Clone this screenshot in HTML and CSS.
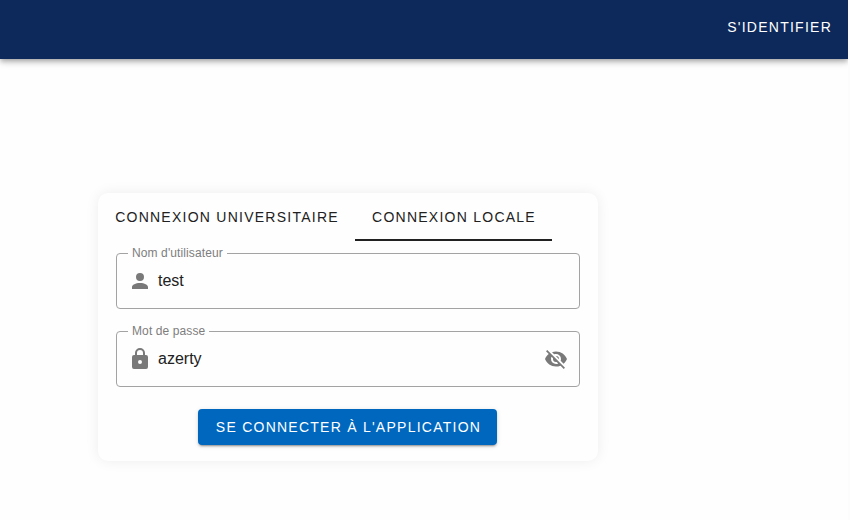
FILE: index.html
```html
<!DOCTYPE html>
<html lang="fr">
<head>
<meta charset="utf-8">
<title>Connexion</title>
<link rel="stylesheet" href="styles.css">
</head>
<body>
<div class="page">
<header class="bar"><a class="bar-link">S'IDENTIFIER</a></header>
<main class="card">
  <nav class="tabs">
    <button class="tab">CONNEXION UNIVERSITAIRE</button>
    <button class="tab tab-active">CONNEXION LOCALE</button>
  </nav>
  <form class="form">
    <fieldset class="field">
      <legend class="label">Nom d'utilisateur</legend>
      <div class="row">
        <svg class="icon" viewBox="0 0 24 24"><path d="M12 4a4 4 0 0 1 4 4 4 4 0 0 1-4 4 4 4 0 0 1-4-4 4 4 0 0 1 4-4m0 10c4.42 0 8 1.79 8 4v2H4v-2c0-2.21 3.58-4 8-4"/></svg>
        <span class="value">test</span>
      </div>
    </fieldset>
    <fieldset class="field">
      <legend class="label">Mot de passe</legend>
      <div class="row">
        <svg class="icon" viewBox="0 0 24 24"><path d="M12 17a2 2 0 0 0 2-2 2 2 0 0 0-2-2 2 2 0 0 0-2 2 2 2 0 0 0 2 2m6-9a2 2 0 0 1 2 2v10a2 2 0 0 1-2 2H6a2 2 0 0 1-2-2V10a2 2 0 0 1 2-2h1V6a5 5 0 0 1 5-5 5 5 0 0 1 5 5v2h1m-6-5a3 3 0 0 0-3 3v2h6V6a3 3 0 0 0-3-3z"/></svg>
        <span class="value">azerty</span>
        <svg class="icon" viewBox="0 0 24 24"><path d="M11.83 9L15 12.16V12a3 3 0 0 0-3-3h-.17m-4.3.8l1.55 1.55c-.05.21-.08.42-.08.65a3 3 0 0 0 3 3c.22 0 .44-.03.65-.08l1.55 1.55c-.67.33-1.41.53-2.2.53a5 5 0 0 1-5-5c0-.79.2-1.53.53-2.2M2 4.27l2.28 2.28.45.45C3.08 8.3 1.78 10 1 12c1.73 4.39 6 7.5 11 7.5 1.55 0 3.03-.3 4.38-.84l.43.42L19.73 22 21 20.73 3.27 3M12 7a5 5 0 0 1 5 5c0 .64-.13 1.26-.36 1.82l2.93 2.93c1.5-1.25 2.7-2.89 3.43-4.75-1.73-4.39-6-7.5-11-7.5-1.4 0-2.74.25-4 .7l2.17 2.15C10.74 7.13 11.35 7 12 7z"/></svg>
      </div>
    </fieldset>
    <button class="submit" type="button">SE CONNECTER À L'APPLICATION</button>
  </form>
</main>
</div>
</body>
</html>
```
FILE: styles.css
```css
* { box-sizing: border-box; }
body {
  margin: 0;
  background: #fcfcfc;
  color: #212121;
  font-family: "Liberation Sans", Arial, sans-serif;
}
.page {
  width: 848px;
  height: 520px;
  overflow: hidden;
  background: #fefefe;
}
.bar {
  width: 848px;
  height: 59px;
  padding: 0 16px 5px;
  display: flex;
  align-items: center;
  justify-content: flex-end;
  background: #0d285a;
  box-shadow: 0 2px 4px -1px rgba(0,0,0,.2), 0 4px 5px rgba(0,0,0,.14), 0 1px 10px rgba(0,0,0,.12);
}
.bar-link { color: #fff; font-size: 14px; letter-spacing: 1.25px; }
.card {
  width: 500px;
  height: 268px;
  margin: 134px 0 0 98px;
  border-radius: 10px;
  background: #fefefe;
  box-shadow: 0 0 14px rgba(0,0,0,.07);
}
.tabs { display: flex; height: 48px; }
button { border: 0; font-family: inherit; font-size: 14px; letter-spacing: 1.25px; white-space: nowrap; }
.tab {
  padding: 2px 15.5px 0 16.5px;
  background: none;
  color: #212121;
  border-bottom: 2px solid transparent;
}
.tab:first-child { width: 257px; }
.tab-active { width: 197px; border-bottom-color: #212121; }
.form { display: flex; flex-direction: column; padding: 5px 18px 0; }
.field {
  width: 464px;
  height: 63px;
  margin: 0 0 15px;
  padding: 0 11px;
  min-width: 0;
  border: 1px solid #a3a3a3;
  border-radius: 4px;
}
.label { padding: 0 4px; height: 14px; font-size: 12px; letter-spacing: .11px; line-height: 14px; color: #7d7d7d; }
.row { display: flex; align-items: center; height: 41px; margin-left: -.5px; }
.icon { width: 24px; height: 24px; fill: #797979; }
.value { flex: 1; margin-left: 6.5px; font-size: 16px; }
.submit {
  width: 299px;
  height: 36px;
  margin: 7px 0 0 82px;
  padding: 0 15px 0 17px;
  border-radius: 4px;
  background: #0067bf;
  color: #fff;
  box-shadow: 0 3px 1px -2px rgba(0,0,0,.2), 0 2px 2px rgba(0,0,0,.14), 0 1px 5px rgba(0,0,0,.12);
}
```
